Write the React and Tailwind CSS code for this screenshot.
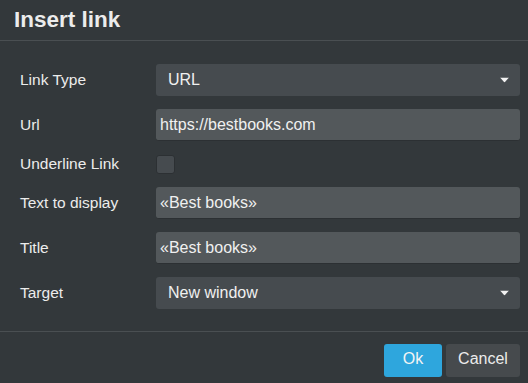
import { useState } from "react";

const FONT = { fontFamily: '"Liberation Sans", Arial, sans-serif' };

function Caret() {
  return (
    <svg width="9" height="5" viewBox="0 0 9 5" className="absolute right-[11px] top-1/2 -translate-y-1/2">
      <path d="M0 0h9L4.5 5z" fill="#f2f2f2" />
    </svg>
  );
}

function Row({ label, children, h = "h-8" }) {
  return (
    <div className={`flex items-center ${h}`}>
      <div className="w-[136px] text-[15.5px] text-[#ececec]">{label}</div>
      <div className="flex-1">{children}</div>
    </div>
  );
}

export default function App() {
  const [underline, setUnderline] = useState(false);

  return (
    <div style={FONT} className="w-[528px] h-[383px] bg-[#33383b] flex flex-col overflow-hidden">
      <div className="h-[41px] border-b border-[#4a4f52] px-[14px] flex items-center">
        <h1 className="text-[22.5px] font-bold text-[#ececec] leading-none">Insert link</h1>
      </div>

      <div className="flex-1 pl-5 pr-2 pt-[23px] flex flex-col gap-[13px]">
        <Row label="Link Type">
          <div className="relative h-8 rounded-[3px] bg-[#464b4f] flex items-center pl-3 text-[16px] text-[#f0f0f0]">
            URL
            <Caret />
          </div>
        </Row>
        <Row label="Url">
          <div className="h-8 rounded-[3px] bg-[#53585b] border-b border-[#2c3033] flex items-center pl-1 text-[16px] text-[#f0f0f0]">
            https://bestbooks.com
          </div>
        </Row>
        <Row label="Underline Link" h="h-5">
          <button
            onClick={() => setUnderline(!underline)}
            className="block w-[19px] h-[19px] rounded-[3px] bg-[#464b4f] border border-[#2c3033]"
          />
        </Row>
        <Row label="Text to display">
          <div className="h-8 rounded-[3px] bg-[#53585b] border-b border-[#2c3033] flex items-center pl-1 text-[16px] text-[#f0f0f0]">
            «Best books»
          </div>
        </Row>
        <Row label="Title">
          <div className="h-8 rounded-[3px] bg-[#53585b] border-b border-[#2c3033] flex items-center pl-1 text-[16px] text-[#f0f0f0]">
            «Best books»
          </div>
        </Row>
        <Row label="Target">
          <div className="relative h-8 rounded-[3px] bg-[#464b4f] flex items-center pl-3 text-[16px] text-[#f0f0f0]">
            New window
            <Caret />
          </div>
        </Row>
      </div>

      <div className="h-[52px] border-t border-[#4a4f52] flex items-start justify-end gap-1 pr-2 pt-3">
        <button className="w-[58px] h-[33px] pb-[4px] rounded-[3px] bg-[#2ea6dd] text-[16px] text-[#f4f4f4]">Ok</button>
        <button className="w-[74px] h-[33px] pb-[4px] rounded-[3px] bg-[#464a4d] text-[16px] text-[#ececec]">Cancel</button>
      </div>
    </div>
  );
}
